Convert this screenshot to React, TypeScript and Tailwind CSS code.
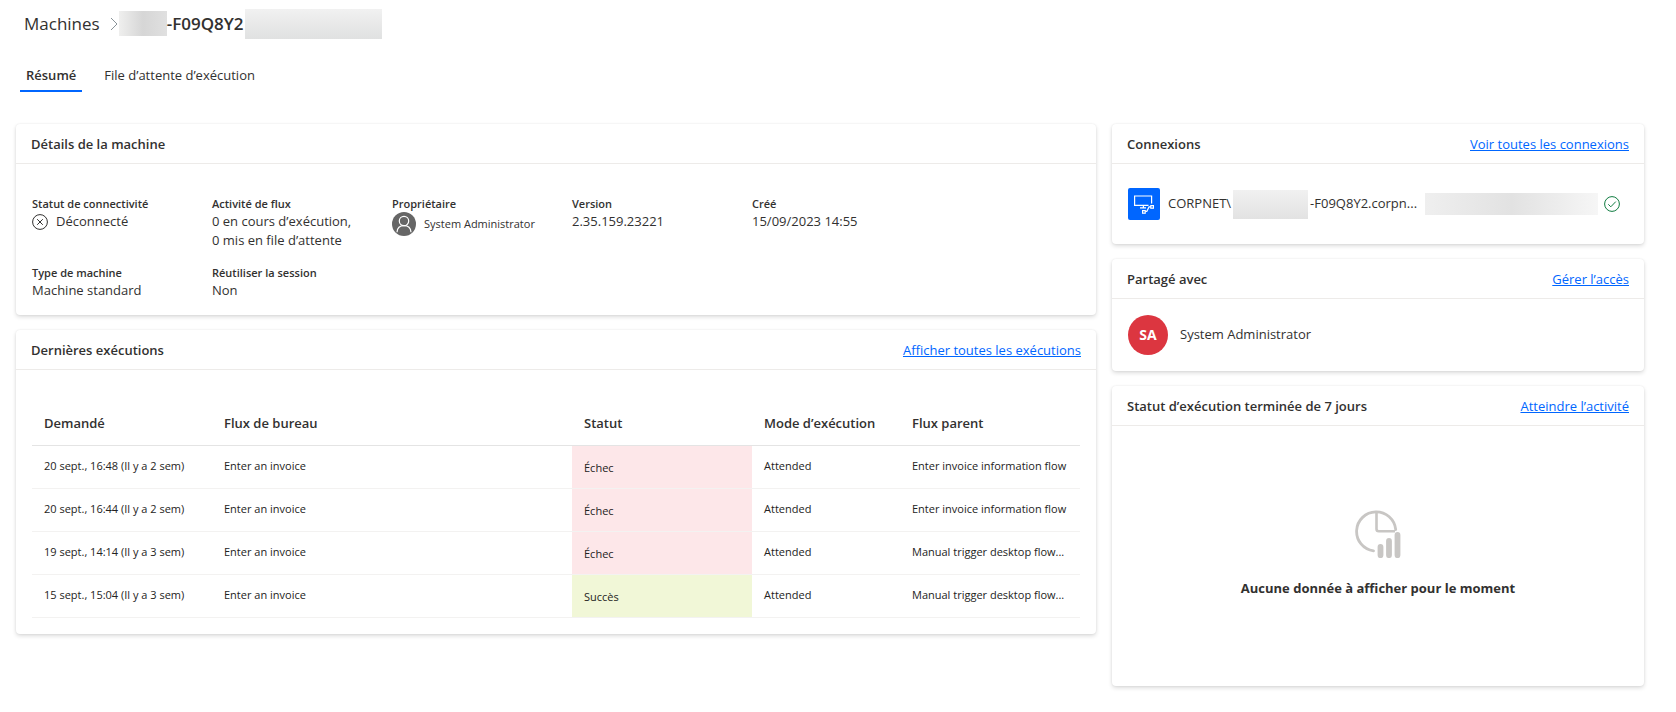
import type { ReactNode } from 'react';

type CardProps = {
  title: string;
  link?: string;
  children: ReactNode;
};

function Card({ title, link, children }: CardProps) {
  return (
    <section className="flex flex-col rounded bg-white shadow-[0_2px_4px_rgba(0,0,0,0.14),0_0_2px_rgba(0,0,0,0.08)]">
      <header className="flex h-10 shrink-0 items-center justify-between border-b border-[#edebe9] px-[15px] pt-[2px]">
        <h2 className="text-[13px] font-semibold">{title}</h2>
        {link && (
          <a href="#" className="text-[13px] text-[#0066ff] underline">
            {link}
          </a>
        )}
      </header>
      {children}
    </section>
  );
}

function Detail({ label, children }: { label: string; children: ReactNode }) {
  return (
    <div>
      <dt className="text-[11px] leading-4 font-semibold">{label}</dt>
      <dd className="text-[13px] leading-[19px]">{children}</dd>
    </div>
  );
}

function DisconnectedIcon() {
  return (
    <svg width="16" height="16" viewBox="0 0 16 16" fill="none" stroke="#323130" aria-hidden="true">
      <circle cx="8" cy="8" r="7.4" />
      <path d="M5.2 5.2l5.6 5.6M10.8 5.2l-5.6 5.6" />
    </svg>
  );
}

function PersonIcon() {
  return (
    <svg width="24" height="24" viewBox="0 0 24 24" fill="none" aria-hidden="true">
      <circle cx="12" cy="12" r="12" fill="#666" />
      <circle cx="12" cy="9" r="4.7" stroke="#fff" strokeWidth="1.2" />
      <path d="M5 20.2c.3-4 3.1-6.5 7-6.5s6.7 2.5 7 6.5" stroke="#fff" strokeWidth="1.2" />
    </svg>
  );
}

function DesktopFlowIcon() {
  return (
    <svg width="32" height="32" viewBox="0 0 32 32" fill="none" aria-hidden="true">
      <rect width="32" height="32" rx="2" fill="#0066ff" />
      <path d="M20.5 17.4H6.6V8h17v7.5" stroke="#fff" strokeWidth="1.2" />
      <path d="M15.4 17.4v2.4M12 19.8h6" stroke="#fff" strokeWidth="1.2" />
      <rect x="14.6" y="22.6" width="2.6" height="2.6" stroke="#fff" strokeWidth="1.2" />
      <rect x="22.8" y="17.6" width="2.6" height="2.6" stroke="#fff" strokeWidth="1.2" />
      <path d="M17.2 23.4h1.6l2.200-4.500h1.800" stroke="#fff" strokeWidth="1.2" />
    </svg>
  );
}

function CheckIcon() {
  return (
    <svg width="16" height="16" viewBox="0 0 16 16" fill="none" stroke="#107c41" className="shrink-0" aria-hidden="true">
      <circle cx="8" cy="8" r="7.4" />
      <path d="M4.3 8.3l2.5 2.5 5-5.2" />
    </svg>
  );
}

function EmptyChartIcon() {
  return (
    <svg width="46" height="48" viewBox="0 0 46 48" fill="none" stroke="#c8c6c4" aria-hidden="true">
      <path d="M18.5 40.9A19.6 19.6 0 1 1 40.7 19.5" strokeWidth="2.8" strokeLinecap="round" />
      <path d="M21.5 2v17q0 2.3 2.3 2.3H40" strokeWidth="2.6" />
      <path d="M25.5 37v8.2M34 31v14.2M42.5 25v20.2" strokeWidth="5.8" strokeLinecap="round" />
    </svg>
  );
}

const runs = [
  { requested: '20 sept., 16:48 (Il y a 2 sem)', flow: 'Enter an invoice', ok: false, parent: 'Enter invoice information flow' },
  { requested: '20 sept., 16:44 (Il y a 2 sem)', flow: 'Enter an invoice', ok: false, parent: 'Enter invoice information flow' },
  { requested: '19 sept., 14:14 (Il y a 3 sem)', flow: 'Enter an invoice', ok: false, parent: 'Manual trigger desktop flow...' },
  { requested: '15 sept., 15:04 (Il y a 3 sem)', flow: 'Enter an invoice', ok: true, parent: 'Manual trigger desktop flow...' },
];

export default function App() {
  return (
    <main className="min-h-screen bg-white pr-8 pb-6 pl-4 font-['Open_Sans','Noto_Sans',sans-serif] text-[#323130]">
      <nav className="flex h-[47px] items-center pl-2" aria-label="Fil d’Ariane">
        <a href="#" className="text-[17px]">
          Machines
        </a>
        <svg width="8" height="14" viewBox="0 0 8 14" fill="none" stroke="#8a9499" className="ml-[10px] shrink-0" aria-hidden="true">
          <path d="M1 1l6 6-6 6" />
        </svg>
        <span className="ml-px h-[25px] w-12 bg-linear-to-r from-[#efefee] via-[#d6d6d6] to-[#e0e0e0]" />
        <h1 className="text-[17px] font-semibold">-F09Q8Y2</h1>
        <span className="ml-px h-[30px] w-[137px] bg-linear-to-b from-[#f1f1f1] to-[#e0e1e1]" />
      </nav>

      <div role="tablist" className="flex h-[45px] items-stretch gap-[14px] pl-1">
        <button role="tab" aria-selected="true" className="border-b-2 border-[#0066ff] px-[6px] pt-[14px] text-[13px] font-semibold">
          Résumé
        </button>
        <button role="tab" aria-selected="false" className="border-b-2 border-transparent px-2 pt-[14px] text-[13px]">
          File d’attente d’exécution
        </button>
      </div>

      <div className="mt-8 grid grid-cols-[minmax(0,1080fr)_minmax(0,532fr)] items-start gap-4">
        <div className="flex flex-col gap-[15px]">
          <Card title="Détails de la machine">
            <dl className="grid grid-cols-[repeat(5,180px)] gap-y-[15px] px-4 pt-8 pb-[15px]">
              <Detail label="Statut de connectivité">
                <span className="flex items-center gap-2">
                  <DisconnectedIcon />
                  Déconnecté
                </span>
              </Detail>
              <Detail label="Activité de flux">
                0 en cours d’exécution,
                <br />0 mis en file d’attente
              </Detail>
              <Detail label="Propriétaire">
                <span className="flex items-center gap-2 text-[11px] leading-6">
                  <PersonIcon />
                  System Administrator
                </span>
              </Detail>
              <Detail label="Version">2.35.159.23221</Detail>
              <Detail label="Créé">15/09/2023 14:55</Detail>
              <Detail label="Type de machine">Machine standard</Detail>
              <Detail label="Réutiliser la session">Non</Detail>
            </dl>
          </Card>

          <Card title="Dernières exécutions" link="Afficher toutes les exécutions">
            <div className="px-4 pt-8 pb-4">
              <table className="w-full table-fixed text-left">
                <colgroup>
                  <col className="w-[180px]" />
                  <col />
                  <col className="w-[180px]" />
                  <col className="w-[148px]" />
                  <col className="w-[180px]" />
                </colgroup>
                <thead>
                  <tr className="h-[43px] border-b border-[#e4e4e4] text-[13px]">
                    <th className="px-3 font-semibold">Demandé</th>
                    <th className="px-3 font-semibold">Flux de bureau</th>
                    <th className="px-3 font-semibold">Statut</th>
                    <th className="px-3 font-semibold">Mode d’exécution</th>
                    <th className="px-3 font-semibold">Flux parent</th>
                  </tr>
                </thead>
                <tbody>
                  {runs.map((run) => (
                    <tr key={run.requested} className="h-[43px] border-b border-[#f3f2f1] text-[11px] whitespace-nowrap text-[#242322]">
                      <td className="px-3">{run.requested}</td>
                      <td className="px-3">{run.flow}</td>
                      <td className={run.ok ? 'bg-[#f1f7d7] px-3 pt-[3px]' : 'bg-[#fde7e9] px-3 pt-[3px]'}>
                        {run.ok ? 'Succès' : 'Échec'}
                      </td>
                      <td className="px-3">Attended</td>
                      <td className="pl-3">{run.parent}</td>
                    </tr>
                  ))}
                </tbody>
              </table>
            </div>
          </Card>
        </div>

        <div className="flex flex-col gap-[15px]">
          <Card title="Connexions" link="Voir toutes les connexions">
            <div className="flex h-20 items-center px-4">
              <DesktopFlowIcon />
              <span className="ml-2 flex w-[257px] shrink-0 items-center text-[13px]">
                CORPNET\
                <span className="mx-[2px] h-[29px] w-[75px] bg-linear-to-b from-[#f1f1f1] to-[#e2e2e2]" />
                -F09Q8Y2.corpn...
              </span>
              <span className="h-[22px] w-[173px] bg-linear-to-r from-[#efefef] via-[#e2e2e2] to-[#f6f6f6]" />
              <span className="ml-[6px]">
                <CheckIcon />
              </span>
            </div>
          </Card>

          <Card title="Partagé avec" link="Gérer l’accès">
            <div className="flex h-[72px] items-center gap-3 px-4 text-[13px]">
              <span className="flex size-10 items-center justify-center rounded-full bg-[#dc3640] text-sm font-bold text-white">
                SA
              </span>
              System Administrator
            </div>
          </Card>

          <Card title="Statut d’exécution terminée de 7 jours" link="Atteindre l’activité">
            <div className="flex h-[260px] flex-col items-center justify-center gap-5 pb-1">
              <EmptyChartIcon />
              <p className="text-[13px] leading-5 font-bold">Aucune donnée à afficher pour le moment</p>
            </div>
          </Card>
        </div>
      </div>
    </main>
  );
}
